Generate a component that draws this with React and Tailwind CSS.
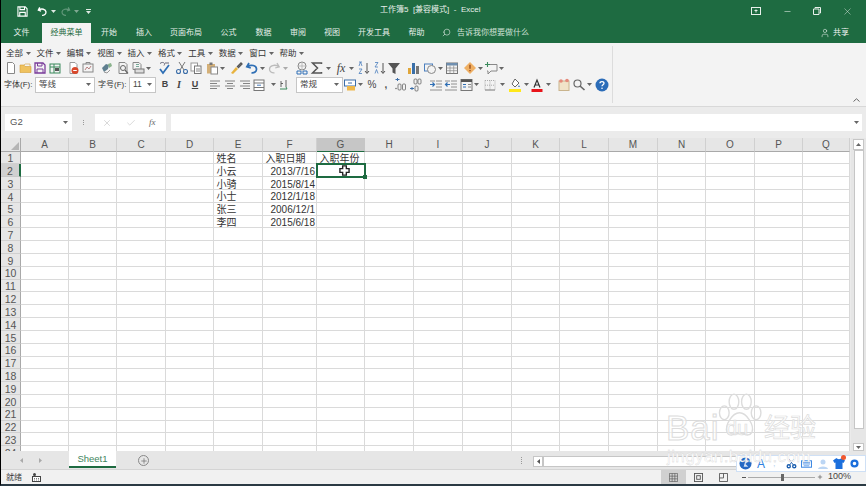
import React from "react";
import { Search, X, Check, Minus, Plus, User } from "lucide-react";

const GREEN = "#1e6b41";

// 14px toolbar glyph
const Ic = ({ className = "", children }) => (
  <span className={`flex h-[14px] w-[14px] shrink-0 items-center justify-center ${className}`}>
    <svg viewBox="0 0 14 14" className="h-[14px] w-[14px]" fill="none">
      {children}
    </svg>
  </span>
);

const Caret = ({ className = "", color = "#666" }) => (
  <span className={`flex h-[14px] w-[6px] shrink-0 items-center justify-center ${className}`}>
    <svg viewBox="0 0 5 3" className="h-[3px] w-[5px]">
      <path d="M0 0h5L2.5 3z" fill={color} />
    </svg>
  </span>
);

const Lines = ({ rows }) => (
  <>
    {rows.map(([x1, x2], i) => (
      <path key={i} d={`M${x1} ${3 + i * 2.5}H${x2}`} stroke="#777" strokeWidth="0.9" />
    ))}
  </>
);

const tabs = [
  { label: "文件", w: "w-[41px]" },
  { label: "经典菜单", w: "w-[49px]", active: true },
  { label: "开始", w: "w-[36px]" },
  { label: "插入", w: "w-[34px]" },
  { label: "页面布局", w: "w-[50px]" },
  { label: "公式", w: "w-[35px]" },
  { label: "数据", w: "w-[35px]" },
  { label: "审阅", w: "w-[34px]" },
  { label: "视图", w: "w-[34px]" },
  { label: "开发工具", w: "w-[50px]" },
  { label: "帮助", w: "w-[35px]" },
];

const menus = ["全部", "文件", "编辑", "视图", "插入", "格式", "工具", "数据", "窗口", "帮助"];

const columns = ["A", "B", "C", "D", "E", "F", "G", "H", "I", "J", "K", "L", "M", "N", "O", "P", "Q"];

const sheetData = {
  "E1": "姓名", "F1": "入职日期", "G1": "入职年份",
  "E2": "小云", "F2": "2013/7/16",
  "E3": "小骑", "F3": "2015/8/14",
  "E4": "小士", "F4": "2012/1/18",
  "E5": "张三", "F5": "2006/12/1",
  "E6": "李四", "F6": "2015/6/18",
};

const rows = Array.from({ length: 24 }, (_, i) => i + 1);

const TitleBar = () => (
  <div className="relative flex h-[22px] items-center text-white">
    <span className="ml-[14px] flex h-[14px] w-[14px] items-center justify-center">
      <svg viewBox="0 0 12 12" className="h-[11px] w-[11px]" fill="none" stroke="#fff" strokeWidth="1.2">
        <path d="M1 1h8l2 2v8H1z" />
        <path d="M3.2 1v3h5V1M3 11V7h6v4" />
      </svg>
    </span>
    <span className="ml-[6px] flex h-[14px] w-[14px] items-center justify-center">
      <svg viewBox="0 0 12 12" className="h-[11px] w-[11px]" fill="none" stroke="#fff" strokeWidth="1.5">
        <path d="M3 1.5L1.5 4.5l3 1M2 4.4c3-2 7.5-1 7.8 2 .2 2.5-2 4-4.3 3.8" />
      </svg>
    </span>
    <Caret color="#dfe9e3" className="ml-[1px]" />
    <span className="ml-[2px] flex h-[14px] w-[14px] items-center justify-center opacity-30">
      <svg viewBox="0 0 12 12" className="h-[11px] w-[11px]" fill="none" stroke="#fff" strokeWidth="1.3">
        <path d="M9 1.5l1.5 3-3 1M10 4.4c-3-2-7.5-1-7.8 2-.2 2.5 2 4 4.3 3.8" />
      </svg>
    </span>
    <Caret color="#7fa892" className="ml-[1px]" />
    <span className="ml-[7px] flex flex-col items-center gap-[1px]">
      <span className="h-px w-[5px] bg-[#dfe9e3]" />
      <svg viewBox="0 0 5 3" className="h-[3px] w-[5px]">
        <path d="M0 0h5L2.5 3z" fill="#dfe9e3" />
      </svg>
    </span>
    <span className="absolute left-[379px] top-[3px] text-[8px] leading-[14px] text-[#e6efe9]">
      工作簿5&nbsp;&nbsp;[兼容模式]&nbsp;&nbsp;-&nbsp;&nbsp;Excel
    </span>
    <div className="ml-auto flex items-center text-[#e8f0eb]">
      <span className="flex w-[33px] justify-center">
        <svg viewBox="0 0 10 8" className="h-[8px] w-[10px]" fill="none" stroke="#e8f0eb">
          <rect x="0.5" y="0.5" width="9" height="7" />
          <path d="M3.5 3.5h3M5 2.5v3" />
        </svg>
      </span>
      <span className="flex w-[30px] justify-center">
        <Minus size={9} strokeWidth={1.5} />
      </span>
      <span className="flex w-[30px] justify-center">
        <svg viewBox="0 0 8 8" className="h-[8px] w-[8px]" fill="none" stroke="#e8f0eb">
          <path d="M2 1.5V.5h5.5V6h-1M.5 2h5.5v5.5H.5z" />
        </svg>
      </span>
      <span className="flex w-[34px] justify-center pr-[3px]">
        <X size={11} strokeWidth={1} />
      </span>
    </div>
  </div>
);

const TabBar = () => (
  <div className="flex h-[21px] items-stretch text-[8px] text-[#e6efe9]">
    {tabs.map((t) => (
      <div
        key={t.label}
        className={`flex items-center justify-center ${t.w} ${
          t.active ? "mt-px bg-[#f3f3f3] text-[#1e6b41]" : ""
        }`}
      >
        {t.label}
      </div>
    ))}
    <div className="ml-[8px] flex items-center gap-[6px] text-[#cfe0d6]">
      <Search size={9} strokeWidth={1.4} className="-scale-x-100 text-white" />
      <span>告诉我你想要做什么</span>
    </div>
    <div className="ml-auto mr-[17px] flex items-center gap-[3px] text-[#f0f5f2]">
      <User size={10} strokeWidth={1.3} />
      <span>共享</span>
    </div>
  </div>
);

const MenuRow = () => (
  <div className="flex h-[14px] items-center pl-[5px] text-[8.5px] text-[#333]">
    {menus.map((m) => (
      <div key={m} className="flex w-[30.4px] items-center gap-[2px]">
        <span>{m}</span>
        <Caret className="w-[5px]" />
      </div>
    ))}
  </div>
);

const IconRow = () => (
  <div className="flex h-[16px] items-center pl-[3px]">
    <Ic><path d="M3.5 1.5h5l2 2v9h-7z" stroke="#888" fill="#fff" /></Ic>
    <Ic className="ml-px"><path d="M1 11.5V4h4l1 1.5h6v6z" fill="#efc25f" stroke="#d4a038" strokeWidth="0.6" /><path d="M5 4l1-1h5v2" stroke="#d4a038" strokeWidth="0.6" /></Ic>
    <Ic><path d="M2 2h8l2 2v8H2z" stroke="#7a3d9b" strokeWidth="1.3" /><path d="M4.5 2v3h4.500V2M4 12V8h6v4" stroke="#7a3d9b" /></Ic>
    <Ic className="ml-px"><rect x="2" y="3" width="10" height="9" stroke="#3a8a5c" /><path d="M2 6h10M6 3v9" stroke="#3a8a5c" /><rect x="7" y="7" width="4" height="3" fill="#555" /></Ic>
    <Ic className="ml-[5px]"><path d="M3 1.500h5l2 2v9H3z" stroke="#999" fill="#fff" /><circle cx="8" cy="9.500" r="3.500" fill="#d9482b" /><path d="M6.200 9.500h3.600" stroke="#fff" /></Ic>
    <Ic><rect x="2" y="3" width="10" height="8" stroke="#888" /><path d="M4 9l2-3 2 2 2-3" stroke="#a66" strokeWidth="0.8" /><path d="M5 3V1.500h4V3" stroke="#888" /></Ic>
    <Ic className="ml-[5px]"><path d="M2 7l4-4 3 1-1 4-4 3z" fill="#5f7f8f" /><path d="M8 3l3-1 1 3-3 2z" fill="#8bb38d" /><path d="M4 11l3 1 3-3" stroke="#999" /></Ic>
    <Ic className="ml-0.5"><path d="M3 1.500h6l2 2v9H3z" stroke="#888" /><circle cx="7" cy="7" r="2.500" stroke="#666" /><path d="M9 9l3 3.500" stroke="#666" strokeWidth="1.200" /></Ic>
    <Ic className="ml-px"><path d="M2 1.500h6l2 2v5H2z" stroke="#888" /><rect x="4" y="8" width="9" height="4" fill="#ddd" stroke="#777" /><path d="M5 3.500h3M5 5.500h3" stroke="#7a9" /></Ic>
    <Caret />
    <Ic className="ml-1.5"><path d="M3 2.500c2-2 6-1 4 2" stroke="#667" /><path d="M8 2h4" stroke="#667" /><path d="M3 8l3 4 6-8" stroke="#2f6fb5" strokeWidth="1.700" /></Ic>
    <Ic className="ml-1"><circle cx="3.500" cy="10.500" r="2" stroke="#3c6ea8" strokeWidth="1.100" /><circle cx="10.500" cy="10.500" r="2" stroke="#3c6ea8" strokeWidth="1.100" /><path d="M5 9l5-8M9 9L4 1" stroke="#777" /></Ic>
    <Ic><rect x="2" y="2" width="6.500" height="8" stroke="#999" fill="#fff" /><rect x="5.500" y="5" width="6.500" height="7.500" stroke="#777" fill="#fff" /><path d="M7 8h4M7 10h4" stroke="#888" /></Ic>
    <Ic className="ml-0.5"><rect x="2" y="3" width="8" height="9.500" fill="#d4b078" /><rect x="4.500" y="1.500" width="3" height="2.500" fill="#777" /><rect x="6" y="6" width="6.500" height="7" fill="#fff" stroke="#888" /></Ic>
    <Caret />
    <Ic className="ml-1"><path d="M2 12l5-6 2 2-5 5z" fill="#e8b33f" /><path d="M8 6l4-4 1 1-4 4" stroke="#555" strokeWidth="1.300" /></Ic>
    <Ic className="ml-0.5"><path d="M4 2L1.800 5.800l4 1.200M2.300 5.600c4-2.600 9-1 9.200 2.300.2 2.700-2.300 4.300-5 4" stroke="#2f6fb5" strokeWidth="1.700" /></Ic>
    <Caret />
    <Ic className="ml-0.5"><path d="M10 2l2.200 3.800-4 1.200M11.700 5.600c-4-2.600-9-1-9.200 2.300-.2 2.700 2.300 4.300 5 4" stroke="#bbb" strokeWidth="1.300" /></Ic>
    <Caret color="#aaa" className="ml-px" />
    <Ic className="ml-[7px]"><circle cx="7" cy="5" r="4" stroke="#888" /><path d="M3 5h8M7 1v8" stroke="#aaa" strokeWidth="0.7" /><path d="M2 10h4v3H2zM8 10h4v3H8z" stroke="#2f6fb5" /></Ic>
    <Ic className="ml-px"><path d="M11.500 3V2h-9l5 5-5 5h9v-1" stroke="#555" strokeWidth="1.500" /></Ic>
    <Caret className="ml-px" />
    <span className="ml-[3px] flex h-[14px] w-[14px] items-center justify-center [font-family:'Liberation_Serif',serif] text-[12px] italic text-[#444]">fx</span>
    <Caret />
    <Ic className="ml-[3px]"><path d="M2 1h3M2 5l1.500-4L5 5M2 8h3L2 12.500h3" stroke="#4b7fbe" strokeWidth="0.8" /><path d="M10 2v10M8 10l2 2.500 2-2.500" stroke="#555" /></Ic>
    <Ic className="ml-0.5"><path d="M2 1.500h3L2 6h3M2 12.500l1.500-4 1.500 4" stroke="#4b7fbe" strokeWidth="0.8" /><path d="M10 2v10M8 10l2 2.500 2-2.500" stroke="#555" /></Ic>
    <Ic><path d="M1 2h12L8.500 7.500V13l-3-1.500v-4z" fill="#555" /></Ic>
    <Ic className="ml-[5px]"><rect x="2" y="7" width="3" height="6" fill="#e0a63a" /><rect x="6" y="2" width="3" height="11" fill="#3a6fa8" /><rect x="10" y="5" width="3" height="8" fill="#777" /></Ic>
    <Ic className="ml-[3px]"><rect x="1.500" y="3" width="8" height="7" stroke="#4b7fbe" /><circle cx="8.500" cy="8.500" r="4" stroke="#888" fill="#f3f3f3" /></Ic>
    <Caret />
    <Ic className="ml-0.5"><rect x="1.500" y="2" width="11" height="10.500" stroke="#777" /><rect x="1.500" y="2" width="11" height="2.500" fill="#6f8fb0" /><path d="M1.500 7h11M1.500 9.700h11M5 4.500v8M8.700 4.500v8" stroke="#888" strokeWidth="0.7" /></Ic>
    <Ic className="ml-1"><path d="M7 1l6 6-6 6-6-6z" fill="#efb064" /><path d="M7 3.800v4M7 9v1.200" stroke="#8a3d10" strokeWidth="1.200" /></Ic>
    <Caret />
    <Ic className="ml-px"><path d="M4 3.500h9v6.500H7l-3 3v-3H3" stroke="#888" /><path d="M1 3.500h5M3.500 1v5" stroke="#3a8a5c" strokeWidth="1.100" /></Ic>
    <Caret />
  </div>
);

const Dropdown = ({ className, children }) => (
  <div className={`flex h-[16px] items-center justify-between border border-[#c6c6c6] bg-white pl-[3px] pr-[3px] text-[8.500px] text-[#444] ${className}`}>
    <span>{children}</span>
    <Caret className="w-[5px]" />
  </div>
);

const FormatRow = () => (
  <div className="flex h-[17px] items-center pl-[3px] text-[8px] text-[#333]">
    <span className="w-[31px] whitespace-nowrap">字体(F):</span>
    <Dropdown className="w-[60px]">等线</Dropdown>
    <span className="ml-[3px] w-[28px] whitespace-nowrap">字号(F):</span>
    <Dropdown className="ml-[3px] w-[27px]">11</Dropdown>
    <span className="ml-0.5 flex w-[14px] justify-center [font-family:'Liberation_Sans'] text-[9px] font-bold text-[#444]">B</span>
    <span className="flex w-[14px] justify-center [font-family:'Liberation_Serif'] text-[10px] font-bold italic text-[#444]">I</span>
    <span className="ml-0.5 flex w-[14px] justify-center [font-family:'Liberation_Sans'] text-[9px] font-bold text-[#444] underline">U</span>
    <Ic className="ml-1.5"><Lines rows={[[2, 12], [2, 9], [2, 12], [2, 9]]} /></Ic>
    <Ic className="ml-px"><Lines rows={[[2, 12], [4, 10], [2, 12], [4, 10]]} /></Ic>
    <Ic className="ml-px"><Lines rows={[[2, 12], [5, 12], [2, 12], [5, 12]]} /></Ic>
    <Ic><rect x="2" y="2" width="10" height="10.500" stroke="#777" fill="#fff" /><path d="M2 5h10M2 9.500h10" stroke="#777" /><path d="M5 7.200h4" stroke="#4b7fbe" /></Ic>
    <Caret className="ml-1" />
    <Ic className="ml-px"><path d="M4 3v6M4 5.500h2M9 2v7" stroke="#555" strokeWidth="0.9" /><path d="M3 11h7l-1-2" stroke="#3a8a5c" /></Ic>
    <Dropdown className="ml-[5px] w-[47px]">常规</Dropdown>
    <Ic><rect x="1.500" y="2" width="11" height="6" fill="#fff" stroke="#3c6ea8" /><path d="M5 5h4" stroke="#3c6ea8" /><rect x="4" y="8" width="8" height="4.500" fill="#efb84a" /></Ic>
    <Caret />
    <span className="ml-0.5 flex w-[14px] justify-center [font-family:'Liberation_Sans'] text-[10px] text-[#444]">%</span>
    <span className="flex w-[14px] justify-center [font-family:'Liberation_Sans'] text-[10px] font-bold leading-[10px] text-[#555]">,</span>
    <Ic><path d="M6.500 1.500h-4M4.500 0v3" stroke="#3c6ea8" /><circle cx="3" cy="10.500" r="0.700" fill="#555" /><rect x="5" y="6" width="3" height="6" rx="1" stroke="#555" strokeWidth="0.7" /><rect x="9.500" y="6" width="3" height="6" rx="1" stroke="#555" strokeWidth="0.7" /></Ic>
    <Ic className="ml-px"><rect x="6" y="1" width="3" height="5" rx="1" stroke="#555" strokeWidth="0.7" /><rect x="10" y="1" width="3" height="5" rx="1" stroke="#555" strokeWidth="0.7" /><path d="M6 10.500H2M4 9v3" stroke="#3c6ea8" /><rect x="7" y="8" width="3" height="5" rx="1" stroke="#555" strokeWidth="0.7" /></Ic>
    <Ic className="ml-[7px]"><path d="M7 3h6M7 6h6M7 9h6M1 12h12M1 3h5" stroke="#777" strokeWidth="0.8" /><path d="M1 6.500h4M3.500 4.500l2 2-2 2" stroke="#2f6fb5" strokeWidth="1.200" /></Ic>
    <Ic className="ml-px"><path d="M7 3h6M7 6h6M7 9h6M1 12h12M1 3h5" stroke="#777" strokeWidth="0.8" /><path d="M6 6.500H2M3.500 4.500l-2 2 2 2" stroke="#2f6fb5" strokeWidth="1.200" /></Ic>
    <Ic className="ml-px"><rect x="2" y="1.500" width="11" height="11" stroke="#777" /><rect x="2" y="1.500" width="11" height="2.500" fill="#555" /><path d="M4 6.500h3M4 9h3" stroke="#2f6fb5" strokeWidth="1.200" /><path d="M9 6.500h3M9 9h3" stroke="#888" /></Ic>
    <Caret />
    <Ic className="ml-1"><rect x="2" y="2.500" width="10" height="9.500" stroke="#aaa" strokeDasharray="1 1" /><path d="M2 7.200h10M7 2.500V12" stroke="#aaa" strokeDasharray="1 1" /><path d="M2 12h10" stroke="#888" /></Ic>
    <Caret className="ml-0.5" />
    <Ic className="ml-[3px]"><path d="M7 1l4 4-4 4-3-3z" stroke="#666" fill="#fff" /><path d="M11 7l1 2h-2z" fill="#4b7fbe" /><rect x="1" y="11" width="12" height="3" fill="#ffe81a" /></Ic>
    <Caret className="ml-px" />
    <Ic className="ml-px"><path d="M4 9.500L7 2l3 7.500M5 7h4" stroke="#333" strokeWidth="1.200" /><rect x="1.500" y="11" width="11" height="3" fill="#e8141a" /></Ic>
    <Caret className="ml-px" />
    <Ic className="ml-[6px]"><rect x="2" y="3" width="10" height="9.500" fill="#f1e3c8" stroke="#c9b48d" /><circle cx="4" cy="3" r="1.800" fill="#e58a7a" /><circle cx="10" cy="2.500" r="1.800" fill="#e58a7a" /></Ic>
    <Ic className="ml-px"><circle cx="5.500" cy="5.500" r="3.500" stroke="#666" strokeWidth="1.200" /><path d="M8 8l4.500 4" stroke="#666" strokeWidth="1.600" /></Ic>
    <Caret />
    <Ic className="ml-[3px]"><circle cx="7" cy="7" r="6.500" fill="#2b6cb8" /><path d="M5 5.300c0-2.300 4-2.300 4 0 0 1.500-2 1.500-2 3" stroke="#fff" strokeWidth="1.300" /><circle cx="7" cy="10.300" r="0.800" fill="#fff" /></Ic>
  </div>
);

const Ribbon = () => (
  <div className="flex h-[64px] border-b border-[#d8d8d8] bg-[#f3f3f3]">
    <div className="my-[3px] flex w-[612px] flex-col border-r border-[#dcdcdc]">
      <MenuRow />
      <IconRow />
      <FormatRow />
    </div>
    <div className="flex flex-1 items-end justify-end pb-[3px] pr-[6px]">
      <svg viewBox="0 0 7 4" className="mb-px h-[4px] w-[7px]" fill="none" stroke="#666">
        <path d="M.5 3.500L3.500.8l3 2.700" />
      </svg>
    </div>
  </div>
);

const FormulaBar = () => (
  <div className="flex h-[31px] items-start bg-[#ebebeb] pt-[7px]">
    <div className="ml-[4px] flex h-[17px] w-[67px] items-center justify-between bg-white pl-[5px] pr-[4px] [font-family:'Liberation_Sans'] text-[9.500px] text-[#555]">
      <span>G2</span>
      <Caret />
    </div>
    <div className="flex h-[17px] w-[23px] flex-col items-center justify-center gap-[1px]">
      <span className="h-px w-px bg-[#999]" />
      <span className="h-px w-px bg-[#999]" />
      <span className="h-px w-px bg-[#999]" />
    </div>
    <div className="flex h-[17px] w-[71px] items-center bg-white pl-[7px] text-[#bdbdbd]">
      <X size={10} strokeWidth={1.4} />
      <Check size={10} strokeWidth={1.4} className="ml-[14px]" />
      <span className="ml-[13px] [font-family:'Liberation_Serif'] text-[9px] italic text-[#666]">fx</span>
    </div>
    <div className="ml-[5px] flex h-[17px] w-[691px] items-center justify-end bg-white pr-[3px]">
      <Caret />
    </div>
  </div>
);

const Cell = ({ col, row }) => {
  const id = `${col}${row}`;
  const text = sheetData[id];
  const isDate = col === "F" && row > 1;
  const isActive = id === "G2";
  return (
    <div
      className={`relative flex items-center overflow-visible whitespace-nowrap border-b border-r border-[#dadada] pt-[3px] text-[10px] leading-none text-[#333] ${
        isDate ? "justify-end pr-px" : "pl-[2.500px]"
      }`}
    >
      {text}
      {isActive && (
        <div className="absolute left-[-1px] top-[-1px] z-10 h-[14.500px] w-[50px] border-2 border-[#1e6b41]">
          <span className="absolute bottom-[-3px] right-[-3px] h-[4px] w-[4px] bg-[#1e6b41]" />
          <svg viewBox="0 0 12 12" className="absolute left-[21px] top-[0px] h-[11px] w-[11px]">
            <path d="M4 1h4v3h3v4H8v3H4V8H1V4h3z" fill="#fff" stroke="#222" strokeWidth="1.500" />
          </svg>
        </div>
      )}
    </div>
  );
};

const Sheet = () => (
  <div className="flex min-h-0 flex-1 overflow-hidden bg-[#ebebeb]">
    <div className="grid h-fit grid-cols-[20px_48px_48px_49px_48px_49px_54px_48px_49px_49px_49px_48px_49px_49px_48px_49px_48px_47px] grid-rows-[13.500px] auto-rows-[12.820px] bg-white">
      <div className="flex items-end justify-end border-b border-r border-[#a9a9a9] bg-[#e6e6e6] pb-px pr-px">
        <span className="h-0 w-0 border-b-[8px] border-l-[8px] border-b-[#b5b5b5] border-l-transparent" />
      </div>
      {columns.map((c) => (
        <div
          key={c}
          className={`flex items-center justify-center border-b border-r pt-px [font-family:'Liberation_Sans'] text-[10px] text-[#555] ${
            c === "G" ? "border-b-[#1e6b41] border-r-[#c6c6c6] bg-[#c6c6c6]" : "border-b-[#a9a9a9] border-r-[#d0d0d0] bg-[#e6e6e6]"
          }`}
        >
          {c}
        </div>
      ))}
      {rows.map((r) => (
        <React.Fragment key={r}>
          <div
            className={`flex items-center justify-center border-b pt-[2px] [font-family:'Liberation_Sans'] text-[10.500px] leading-none text-[#555] ${
              r === 2 ? "border-r-2 border-b-[#c8c8c8] border-r-[#1e6b41] bg-[#d0d0d0]" : "border-r border-b-[#d0d0d0] border-r-[#a9a9a9] bg-[#e6e6e6]"
            }`}
          >
            {r}
          </div>
          {columns.map((c) => (
            <Cell key={c} col={c} row={r} />
          ))}
        </React.Fragment>
      ))}
    </div>
    <div className="ml-px flex w-[15px] flex-col items-center bg-[#e6e6e6]">
      <div className="mt-px flex h-[11px] w-[11px] items-center justify-center border border-[#c6c6c6] bg-white">
        <svg viewBox="0 0 5 3" className="h-[3px] w-[5px]"><path d="M0 3h5L2.500 0z" fill="#666" /></svg>
      </div>
      <div className="h-[279px] w-[10px] border border-[#c6c6c6] bg-white" />
      <div className="mt-auto flex h-[8px] w-[11px] items-center justify-center border border-[#c6c6c6] bg-white">
        <svg viewBox="0 0 5 3" className="h-[3px] w-[5px]"><path d="M0 0h5L2.500 3z" fill="#666" /></svg>
      </div>
    </div>
  </div>
);

const SheetBar = () => (
  <div className="flex h-[19px] items-start border-b border-[#d4d4d4] bg-[#e6e6e6]">
    <div className="flex h-[18px] w-[68px] items-center gap-[16px] pl-[19px]">
      <svg viewBox="0 0 3 5" className="h-[5px] w-[3px]"><path d="M3 0v5L0 2.500z" fill="#aaa" /></svg>
      <svg viewBox="0 0 3 5" className="h-[5px] w-[3px]"><path d="M0 0v5l3-2.500z" fill="#aaa" /></svg>
    </div>
    <div className="flex h-[17px] w-[47px] items-center justify-center border-b-2 border-[#1e6b41] bg-white pt-[2px] [font-family:'Liberation_Sans'] text-[9.500px] text-[#3f8560]">
      Sheet1
    </div>
    <div className="ml-[22px] mt-[4px] flex h-[11px] w-[11px] items-center justify-center rounded-full border border-[#888]">
      <Plus size={8} strokeWidth={2} className="text-[#666]" />
    </div>
    <div className="ml-[372px] mt-[6px] flex flex-col gap-[1px]">
      <span className="h-px w-px bg-[#999]" />
      <span className="h-px w-px bg-[#999]" />
      <span className="h-px w-px bg-[#999]" />
      <span className="h-px w-px bg-[#999]" />
    </div>
    <div className="ml-[11px] mt-[5px] flex h-[11px] w-[10px] items-center justify-center border border-[#c6c6c6] bg-white">
      <svg viewBox="0 0 3 5" className="h-[5px] w-[3px]"><path d="M3 0v5L0 2.500z" fill="#555" /></svg>
    </div>
    <div className="mt-[5px] h-[11px] flex-1 border border-[#c6c6c6] bg-white" />
  </div>
);

const StatusBar = () => (
  <div className="flex h-[14px] items-center bg-[#f1f1f1] text-[8px] text-[#444]">
    <span className="ml-[5px] pt-px">就绪</span>
    <svg viewBox="0 0 9 9" className="ml-[10px] h-[9px] w-[9px]">
      <circle cx="2.500" cy="1.500" r="1.500" fill="#444" />
      <rect x="0.500" y="3.500" width="8" height="5" fill="#fff" stroke="#444" />
      <path d="M2 5.500h5M2 7h5" stroke="#444" strokeWidth="0.700" strokeDasharray="1 1" />
    </svg>
    <div className="ml-[620px] flex h-full w-[25px] items-center justify-center bg-[#d0d0d0]">
      <svg viewBox="0 0 10 10" className="h-[9px] w-[9px]" fill="none" stroke="#555" strokeWidth="0.700">
        <path d="M.5.500h9v9h-9zM.5 3.500h9M.5 6.500h9M3.500.500v9M6.500.500v9" />
      </svg>
    </div>
    <svg viewBox="0 0 10 10" className="ml-[8px] h-[9px] w-[9px]" fill="none" stroke="#555">
      <rect x="0.500" y="0.500" width="9" height="9" />
      <rect x="3" y="3" width="4" height="4" />
    </svg>
    <svg viewBox="0 0 10 10" className="ml-[16px] h-[9px] w-[9px]" fill="none" stroke="#555">
      <path d="M.5.500h9v9h-9zM5 .5v5H.5" />
    </svg>
    <span className="ml-[14px] h-px w-[4px] bg-[#555]" />
    <div className="relative ml-[2px] h-px w-[67px] bg-[#aaa]">
      <span className="absolute left-[33px] top-[-3px] h-[7px] w-[3px] bg-[#666]" />
    </div>
    <Plus size={6} strokeWidth={2.500} className="ml-[2px] text-[#555]" />
    <span className="ml-[5px] [font-family:'Liberation_Sans'] text-[9px]">100%</span>
  </div>
);

const ImeBar = () => (
  <div className="absolute bottom-[12px] right-0 flex h-[17px] w-[130px] items-center border border-[#cfe0f5] bg-white pl-[2px] text-[#2f7fe0]">
    <svg viewBox="0 0 14 14" className="h-[13px] w-[13px]">
      <circle cx="7" cy="7" r="6.500" fill="#2568c4" />
      <path d="M7 3.500h4L7 7.500l3 3H5z" fill="#fff" opacity="0.800" />
    </svg>
    <span className="ml-[5px] [font-family:'Liberation_Sans'] text-[12px] font-medium leading-none">A</span>
    <span className="ml-[8px] text-[9px] leading-none text-[#b8d4f2]">,</span>
    <svg viewBox="0 0 12 12" className="ml-[10px] h-[11px] w-[11px]" fill="none" stroke="#1c5fb0" strokeWidth="1.500">
      <circle cx="3" cy="9" r="1.700" />
      <circle cx="9" cy="9" r="1.700" />
      <path d="M4 7.500L9 1M8 7.500L3 1" strokeWidth="1" />
    </svg>
    <svg viewBox="0 0 12 10" className="ml-[4px] h-[10px] w-[11px]" fill="none" stroke="#2f7fe0">
      <rect x="0.500" y="1.500" width="11" height="7" />
      <path d="M2 3.500h8M2 5h8M3 7h6" strokeWidth="0.800" />
    </svg>
    <svg viewBox="0 0 10 10" className="ml-[6px] h-[10px] w-[10px]" fill="#bcd6f4">
      <circle cx="5" cy="3" r="2.500" />
      <path d="M0 10c0-3.500 10-3.500 10 0z" />
    </svg>
    <span className="relative ml-[5px] flex">
      <svg viewBox="0 0 12 11" className="h-[11px] w-[12px]" fill="#1c6fdc">
        <path d="M3.500 0L0 2.500 1.500 5l1-.5V11h7V4.500l1 .5L12 2.500 8.500 0C8 1.500 4 1.500 3.500 0z" />
      </svg>
      <span className="absolute -right-[1px] -top-[3px] h-[5px] w-[5px] rounded-full bg-[#f0582f]" />
    </span>
    <svg viewBox="0 0 12 12" className="ml-[4px] h-[11px] w-[11px]" fill="none" stroke="#1c6fdc" strokeWidth="2.500">
      <circle cx="6" cy="6" r="3.200" />
    </svg>
  </div>
);

const Watermark = () => (
  <div className="pointer-events-none absolute left-[665px] top-[392px] z-20 h-[78px] w-[152px]">
    <svg viewBox="0 0 34 34" className="absolute left-[50px] top-0 h-[47px] w-[47px]" fill="none" stroke="#dcdcdc" strokeWidth="1">
      <ellipse cx="6" cy="15" rx="3.500" ry="5" />
      <ellipse cx="13" cy="7" rx="3.500" ry="5.500" />
      <ellipse cx="22" cy="7" rx="3.500" ry="5.500" />
      <ellipse cx="29" cy="15" rx="3.500" ry="5" />
      <path d="M17 15c-5 0-11 9-9 14 2 4 6 1 9 1s7 3 9-1c2-5-4-14-9-14z" />
    </svg>
    <span className="absolute left-0 top-[18px] [font-family:'Liberation_Sans'] text-[35px] leading-[36px] tracking-[1px] text-white/60 [-webkit-text-stroke:1px_#dcdcdc]">
      Bai
    </span>
    <span className="absolute left-[60px] top-[24px] [font-family:'Liberation_Sans'] text-[20px] leading-[24px] text-white/60 [-webkit-text-stroke:0.700px_#dcdcdc]">
      du
    </span>
    <span className="absolute left-[98px] top-[20px] text-[26px] leading-[32px] text-white/60 [-webkit-text-stroke:0.700px_#dcdcdc]">
      经验
    </span>
    <span className="absolute left-[1px] top-[55px] [font-family:'Liberation_Sans'] text-[17px] leading-[20px] tracking-[0.4px] text-white [-webkit-text-stroke:0.300px_#d0d0d0]">
      jingyan.baidu.com
    </span>
  </div>
);

const App = () => (
  <div className="relative flex h-[486px] w-[866px] flex-col overflow-hidden border-b-2 border-l border-b-[#2b3a44] border-l-black bg-white [font-family:'Liberation_Sans','Noto_Sans_CJK_SC',sans-serif]">
    <div style={{ backgroundColor: GREEN }}>
      <TitleBar />
      <TabBar />
    </div>
    <Ribbon />
    <FormulaBar />
    <Sheet />
    <SheetBar />
    <StatusBar />
    <ImeBar />
    <Watermark />
  </div>
);

export default App;
